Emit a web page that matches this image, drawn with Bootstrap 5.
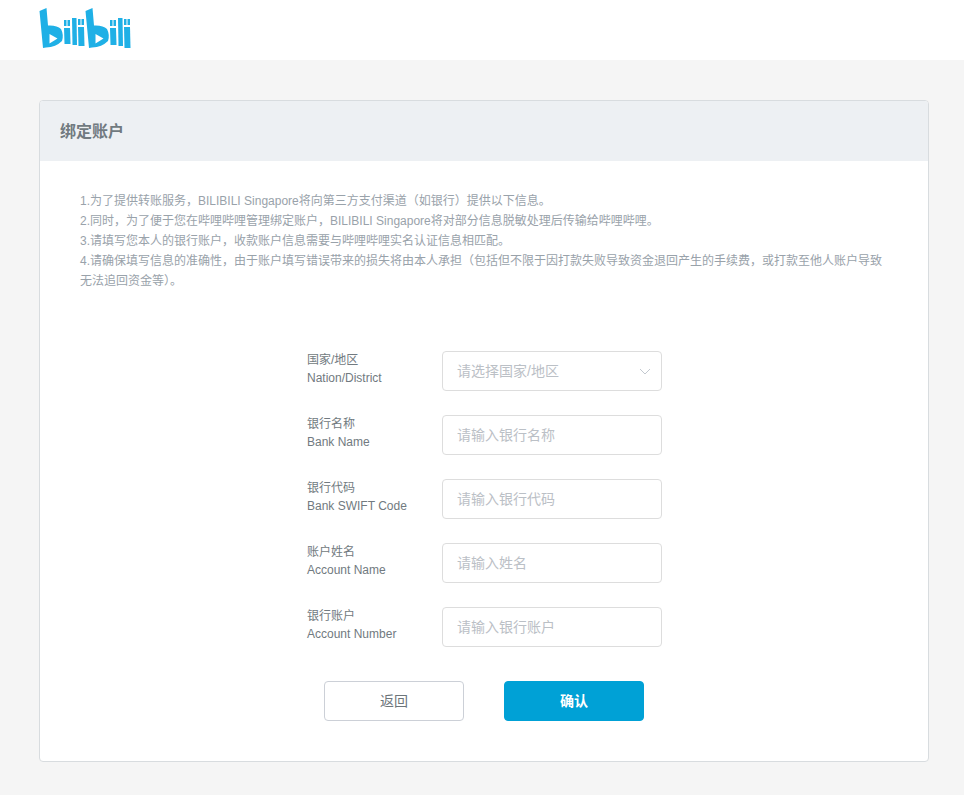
<!DOCTYPE html>
<html lang="zh-CN">
<head>
    <meta charset="UTF-8">
    <meta name="viewport" content="width=device-width, initial-scale=1.0">
    <title>绑定账户</title>
    <link href="https://cdn.jsdelivr.net/npm/bootstrap@5.3.0/dist/css/bootstrap.min.css" rel="stylesheet">
    <style>
        body {
            background: #f5f5f5;
            font-family: "Liberation Sans", "Noto Sans CJK SC", sans-serif;
            color: #6d757a;
        }
        .top-bar { height: 60px; background: #fff; padding-left: 39px; }
        .top-bar svg { display: block; }
        .bind-card {
            margin: 40px 35px 0 39px;
            height: 662px;
            background: #fff;
            border: 1px solid #d8dcdf;
            border-radius: 4px;
            overflow: hidden;
        }
        .bind-head {
            height: 60px;
            background: #edf0f3;
            padding-left: 20px;
            font-size: 16px;
            font-weight: 700;
            line-height: 62px;
            color: #717a80;
        }
        .notes {
            padding: 29.500px 40px 0 40px;
            font-size: 12px;
            line-height: 20.100px;
            color: #99a2aa;
            height: 190px;
        }
        .form-wrap { width: 355px; margin-left: 267px; }
        .field-row { height: 40px; margin-bottom: 24px; }
        .field-label { width: 135px; font-size: 12px; line-height: 18px; color: #717a80; padding-bottom: 5px; }
        .field-box {
            width: 220px;
            height: 40px;
            border: 1px solid #ddd;
            border-radius: 4px;
            padding: 0 14px;
            font-size: 14px;
            color: #6d757a;
            box-shadow: none;
        }
        .field-box::placeholder { color: #bbc0c6; opacity: 1; }
        .field-pick { color: #bbc0c6; background: #fff; padding-right: 10px; }
        .btn-row { margin-left: 284px; margin-top: 34px; gap: 40px; }
        .btn-back, .btn-ok {
            width: 140px;
            height: 40px;
            border-radius: 4px;
            font-size: 14px;
            padding: 0;
        }
        .btn-back { border: 1px solid #ccd0d7; background: #fff; color: #6d757a; }
        .btn-ok { border: 1px solid #00a1d6; background: #00a1d6; color: #fff; font-weight: 700; }
    </style>
</head>
<body>
    <!-- logo -->
    <div class="top-bar">
        <svg width="95" height="60" viewBox="39 0 95 60" fill="#1fb0e6">
            <path fill-rule="evenodd" d="M39.500 11 L46.500 8 L48 25.500 Q57 25 61 29 Q64 35 62 41 Q56 47 46 47.500 L43 48 Z M49.500 34 L49.500 43.500 L57.500 38.500 Z"/>
            <rect x="64" y="20" width="2.500" height="6"/><rect x="67.500" y="20" width="2.500" height="6"/>
            <path d="M64 28 L70 28 L70.500 44 L64.500 44 Z"/>
            <path d="M72 18 L76.500 18 L77 45 L72.500 45 Z"/>
            <rect x="78" y="19" width="2.500" height="6"/><rect x="81.500" y="19" width="2.500" height="6"/>
            <path d="M78 27 L84 27 L84.500 46 L78.500 46 Z"/>
            <path fill-rule="evenodd" d="M85.500 11 L92.500 8 L94 25.500 Q103 25 107 29 Q110 35 108 41 Q102 47 92 47.500 L89 48 Z M95.500 34 L95.500 43.500 L103.500 38.500 Z"/>
            <rect x="110" y="20" width="2.500" height="6"/><rect x="113.500" y="20" width="2.500" height="6"/>
            <path d="M110 28 L116 28 L116.500 45 L110.500 45 Z"/>
            <path d="M118 18 L122.500 18 L123 46 L118.500 46 Z"/>
            <rect x="124" y="19" width="2.500" height="6"/><rect x="127.500" y="19" width="2.500" height="6"/>
            <path d="M124 27 L130 27 L130.500 48 L124.500 48 Z"/>
        </svg>
    </div>

    <div class="bind-card">
        <div class="bind-head">绑定账户</div>
        <div class="notes">
            <div>1.为了提供转账服务，BILIBILI Singapore将向第三方支付渠道（如银行）提供以下信息。</div>
            <div>2.同时，为了便于您在哔哩哔哩管理绑定账户，BILIBILI Singapore将对部分信息脱敏处理后传输给哔哩哔哩。</div>
            <div>3.请填写您本人的银行账户，收款账户信息需要与哔哩哔哩实名认证信息相匹配。</div>
            <div>4.请确保填写信息的准确性，由于账户填写错误带来的损失将由本人承担（包括但不限于因打款失败导致资金退回产生的手续费，或打款至他人账户导致无法追回资金等）。</div>
        </div>
        <form class="form-wrap">
            <div class="field-row d-flex align-items-center">
                <div class="field-label">国家/地区<br>Nation/District</div>
                <div class="field-box field-pick d-flex align-items-center justify-content-between">
                    <span>请选择国家/地区</span>
                    <svg width="12" height="7" viewBox="0 0 12 7" fill="none" stroke="#c3c9d0" stroke-width="1"><path d="M1 1 L6 6 L11 1"/></svg>
                </div>
            </div>
            <div class="field-row d-flex align-items-center">
                <div class="field-label">银行名称<br>Bank Name</div>
                <input class="field-box form-control" type="text" placeholder="请输入银行名称">
            </div>
            <div class="field-row d-flex align-items-center">
                <div class="field-label">银行代码<br>Bank SWIFT Code</div>
                <input class="field-box form-control" type="text" placeholder="请输入银行代码">
            </div>
            <div class="field-row d-flex align-items-center">
                <div class="field-label">账户姓名<br>Account Name</div>
                <input class="field-box form-control" type="text" placeholder="请输入姓名">
            </div>
            <div class="field-row d-flex align-items-center">
                <div class="field-label">银行账户<br>Account Number</div>
                <input class="field-box form-control" type="text" placeholder="请输入银行账户">
            </div>
        </form>
        <div class="btn-row d-flex">
            <button type="button" class="btn btn-back">返回</button>
            <button type="button" class="btn btn-ok">确认</button>
        </div>
    </div>

    <script src="https://cdn.jsdelivr.net/npm/bootstrap@5.3.0/dist/js/bootstrap.bundle.min.js"></script>
</body>
</html>
